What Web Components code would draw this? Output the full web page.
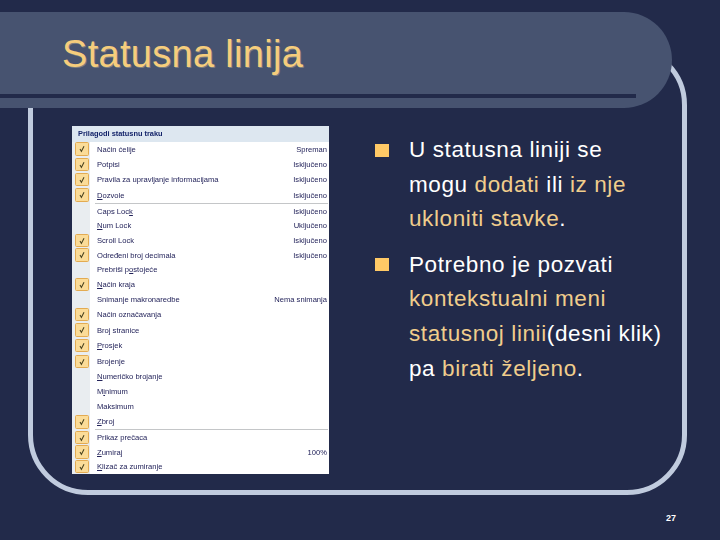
<!DOCTYPE html>
<html>
<head>
<meta charset="utf-8">
<title>Statusna linija</title>
<style>
    html, body{ margin:0; padding:0; width:720px; height:540px; overflow:hidden; background:#222a4a; }
    u{ text-underline-offset:1px; }
</style>
</head>
<body>
<slide-page>
    <title-band slot="title">Statusna linija</title-band>
    <status-menu slot="picture" heading="Prilagodi statusnu traku">
        <menu-group style="--row-h:15.3px">
            <menu-row checked value="Spreman">Način ćelije</menu-row>
            <menu-row checked value="Isključeno">Potpisi</menu-row>
            <menu-row checked value="Isključeno">Pravila za upravljanje informacijama</menu-row>
            <menu-row checked value="Isključeno"><u>D</u>ozvole</menu-row>
        </menu-group>
        <menu-group sep style="--row-h:14.7px">
            <menu-row value="Isključeno">Caps Loc<u>k</u></menu-row>
            <menu-row value="Uključeno"><u>N</u>um Lock</menu-row>
            <menu-row checked value="Isključeno">Scroll Lock</menu-row>
            <menu-row checked value="Isključeno">Određeni broj decimala</menu-row>
            <menu-row>Prebriši p<u>o</u>stojeće</menu-row>
            <menu-row checked><u>N</u>ačin kraja</menu-row>
            <menu-row value="Nema snimanja">Snimanje makronaredbe</menu-row>
        </menu-group>
        <menu-group style="--row-h:15.7px">
            <menu-row checked>Način označavanja</menu-row>
            <menu-row checked>Broj stranice</menu-row>
            <menu-row checked><u>P</u>rosjek</menu-row>
            <menu-row checked>Brojenje</menu-row>
        </menu-group>
        <menu-group style="--row-h:15px">
            <menu-row><u>N</u>umeričko brojanje</menu-row>
            <menu-row>M<u>i</u>nimum</menu-row>
            <menu-row>Maksimum</menu-row>
            <menu-row checked><u>Z</u>broj</menu-row>
        </menu-group>
        <menu-group sep style="--row-h:14.5px">
            <menu-row checked>Prikaz prečaca</menu-row>
            <menu-row checked value="100%"><u>Z</u>umiraj</menu-row>
            <menu-row checked><u>K</u>lizač za zumiranje</menu-row>
        </menu-group>
    </status-menu>
    <bullet-item slot="text">U statusna liniji se mogu <em>dodati</em> ili <em>iz nje ukloniti stavke</em>.</bullet-item>
    <bullet-item slot="text">Potrebno je pozvati <em>kontekstualni meni statusnoj linii</em>(desni klik) pa <em>birati željeno</em>.</bullet-item>
    <span slot="number">27</span>
</slide-page>

<script>
class SlidePage extends HTMLElement{
    constructor(){
        super();
        this.attachShadow({mode: 'open'}).innerHTML = `
            <style>
                :host{
                    display:flex;
                    flex-direction:column;
                    width:720px;
                    height:540px;
                    box-sizing:border-box;
                    padding-top:12px;
                    background:#222a4a;
                    color:#fff;
                    font-family:"Liberation Sans", Arial, sans-serif;
                }
                .frame{
                    box-sizing:border-box;
                    height:450px;
                    margin:-63px 33px 0 28px;
                    padding:76px 0 0 39px;
                    border:5px solid #c0cbde;
                    border-radius:60px;
                    display:flex;
                    gap:46px;
                }
                .text{
                    display:flex;
                    flex-direction:column;
                    gap:11px;
                    margin-top:7px;
                    width:288px;
                }
                .number{
                    align-self:flex-end;
                    margin:17px 44px 0 0;
                    font:bold 9px/12px "Liberation Sans", Arial, sans-serif;
                }
            </style>
            <slot name="title"></slot>
            <div class="frame">
                <slot name="picture"></slot>
                <div class="text"><slot name="text"></slot></div>
            </div>
            <div class="number"><slot name="number"></slot></div>
        `;
    }
}

class TitleBand extends HTMLElement{
    constructor(){
        super();
        this.attachShadow({mode: 'open'}).innerHTML = `
            <style>
                :host{
                    display:block;
                    position:relative;
                    z-index:1;
                    box-sizing:border-box;
                    width:672px;
                    height:96px;
                    padding:21px 0 0 62px;
                    background:#475370;
                    border-radius:0 48px 48px 0;
                    color:#f6cd7c;
                    font-size:38px;
                    letter-spacing:.3px;
                    line-height:42px;
                    text-shadow:1px 1px 0 #7d7f80;
                }
                .rule{
                    position:absolute;
                    left:0;
                    top:82px;
                    width:636px;
                    height:4px;
                    background:#222a4a;
                }
            </style>
            <slot></slot>
            <div class="rule"></div>
        `;
    }
}

class StatusMenu extends HTMLElement{
    constructor(){
        super();
        this.attachShadow({mode: 'open'}).innerHTML = `
            <style>
                :host{
                    display:block;
                    box-sizing:border-box;
                    width:257px;
                    height:348px;
                    background:linear-gradient(90deg, #e9edf0 0 18px, #fff 18px);
                    color:#23235a;
                    font:7.6px "Liberation Sans", Arial, sans-serif;
                    filter:blur(.3px);
                }
                .head{
                    height:15.5px;
                    box-sizing:border-box;
                    padding-left:6px;
                    background:#dde7f0;
                    color:#14246a;
                    font-size:7.4px;
                    font-weight:bold;
                    line-height:15px;
                }
            </style>
            <div class="head"></div>
            <slot></slot>
        `;
        this.shadowRoot.querySelector('.head').textContent = this.getAttribute('heading');
    }
}

class MenuGroup extends HTMLElement{
    constructor(){
        super();
        this.attachShadow({mode: 'open'}).innerHTML = `
            <style>
                :host{ display:block; }
                :host([sep])::before{
                    content:"";
                    display:block;
                    height:1px;
                    margin-left:23px;
                    margin-right:1px;
                    background:#c4c6c8;
                }
            </style>
            <slot></slot>
        `;
    }
}

class MenuRow extends HTMLElement{
    constructor(){
        super();
        this.attachShadow({mode: 'open'}).innerHTML = `
            <style>
                :host{
                    display:flex;
                    align-items:center;
                    height:var(--row-h, 15px);
                    white-space:nowrap;
                }
                .box{
                    flex:none;
                    box-sizing:border-box;
                    width:14px;
                    height:13.5px;
                    margin:0 8px 0 3px;
                    border:1px solid #e3ab52;
                    border-radius:1.5px;
                    background:#fbdc98;
                    visibility:hidden;
                }
                :host([checked]) .box{ visibility:visible; }
                svg{ display:block; width:12px; height:11.5px; }
                .name{ flex:1; }
                .value{ margin-right:2px; }
            </style>
            <div class="box">
                <svg viewBox="0 0 12 11.5"><path d="M4 6 5.4 8.4 8 3.2" fill="none" stroke="#4a4420" stroke-width="1.1"/></svg>
            </div>
            <div class="name"><slot></slot></div>
            <div class="value"></div>
        `;
        this.shadowRoot.querySelector('.value').textContent = this.getAttribute('value') || '';
    }
}

class BulletItem extends HTMLElement{
    constructor(){
        super();
        this.attachShadow({mode: 'open'}).innerHTML = `
            <style>
                :host{
                    display:flex;
                    gap:20px;
                    font-size:22.5px;
                    letter-spacing:.6px;
                    line-height:34.6px;
                    color:#fff;
                }
                .mark{
                    flex:none;
                    width:14px;
                    height:13px;
                    margin-top:10.5px;
                    background:#ffc966;
                }
                ::slotted(em){ font-style:normal; color:#f0cd8c; }
            </style>
            <div class="mark"></div>
            <div><slot></slot></div>
        `;
    }
}

customElements.define('slide-page', SlidePage);
customElements.define('title-band', TitleBand);
customElements.define('status-menu', StatusMenu);
customElements.define('menu-group', MenuGroup);
customElements.define('menu-row', MenuRow);
customElements.define('bullet-item', BulletItem);
</script>
</body>
</html>
